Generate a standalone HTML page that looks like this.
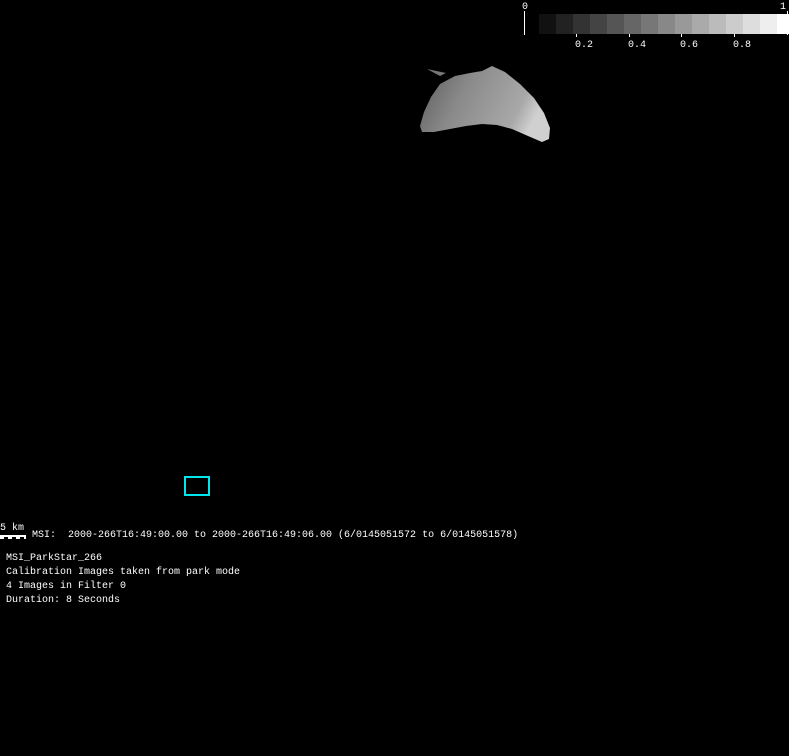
<!DOCTYPE html>
<html><head><style>
html,body{margin:0;padding:0;background:#000;width:789px;height:756px;overflow:hidden;position:relative}
.t{position:absolute;color:#fff;font-family:"Liberation Mono",monospace;font-size:10px;line-height:14px;white-space:pre}
</style></head><body>
<svg width="789" height="756" style="position:absolute;left:0;top:0">
<defs>
<linearGradient id="g" x1="0" y1="0" x2="1" y2="0.3">
<stop offset="0" stop-color="#5a5a5a"/><stop offset="0.4" stop-color="#8a8a8a"/><stop offset="0.85" stop-color="#a8a8a8"/><stop offset="1" stop-color="#d0d0d0"/>
</linearGradient>
</defs>
<g id="cb">
<rect x="539" y="14" width="17" height="20" fill="#111"/>
<rect x="556" y="14" width="17" height="20" fill="#222"/>
<rect x="573" y="14" width="17" height="20" fill="#333"/>
<rect x="590" y="14" width="17" height="20" fill="#444"/>
<rect x="607" y="14" width="17" height="20" fill="#555"/>
<rect x="624" y="14" width="17" height="20" fill="#666"/>
<rect x="641" y="14" width="17" height="20" fill="#777"/>
<rect x="658" y="14" width="17" height="20" fill="#888"/>
<rect x="675" y="14" width="17" height="20" fill="#999"/>
<rect x="692" y="14" width="17" height="20" fill="#aaa"/>
<rect x="709" y="14" width="17" height="20" fill="#bbb"/>
<rect x="726" y="14" width="17" height="20" fill="#ccc"/>
<rect x="743" y="14" width="17" height="20" fill="#ddd"/>
<rect x="760" y="14" width="17" height="20" fill="#eee"/>
<rect x="777" y="14" width="12" height="20" fill="#fff"/>
</g>
<rect x="524" y="11" width="1" height="24" fill="#fff"/>
<rect x="787" y="11" width="1" height="24" fill="#fff"/>
<rect x="576" y="34" width="1" height="3" fill="#fff"/>
<rect x="629" y="34" width="1" height="3" fill="#fff"/>
<rect x="681" y="34" width="1" height="3" fill="#fff"/>
<rect x="734" y="34" width="1" height="3" fill="#fff"/>
<path d="M427,69 L446,73 L440,76 Z" fill="#777"/>
<path d="M420,126 L424,112 L431,97 L440,84 L455,76 L470,73 L482,71 L492,66 L505,72 L520,84 L534,98 L544,113 L550,128 L549,139 L542,142 L528,136 L512,129 L497,125 L482,124 L466,126 L450,129 L434,132 L422,132 Z" fill="url(#g)"/>
<rect x="185" y="477" width="24" height="18" fill="none" stroke="#00e5ee" stroke-width="2"/>
<rect x="0" y="535" width="26" height="4" fill="#fff"/>
<rect x="4" y="537" width="4" height="2" fill="#000"/>
<rect x="12" y="537" width="4" height="2" fill="#000"/>
<rect x="20" y="537" width="4" height="2" fill="#000"/>
</svg>
<div class="t" style="left:522px;top:1px">0</div>
<div class="t" style="left:780px;top:1px">1</div>
<div class="t" style="left:575px;top:39px">0.2</div>
<div class="t" style="left:628px;top:39px">0.4</div>
<div class="t" style="left:680px;top:39px">0.6</div>
<div class="t" style="left:733px;top:39px">0.8</div>
<div class="t" style="left:0px;top:522px">5 km</div>
<div class="t" style="left:32px;top:529px">MSI:  2000-266T16:49:00.00 to 2000-266T16:49:06.00 (6/0145051572 to 6/0145051578)</div>
<div class="t" style="left:6px;top:552px">MSI_ParkStar_266
Calibration Images taken from park mode
4 Images in Filter 0
Duration: 8 Seconds</div>
</body></html>
